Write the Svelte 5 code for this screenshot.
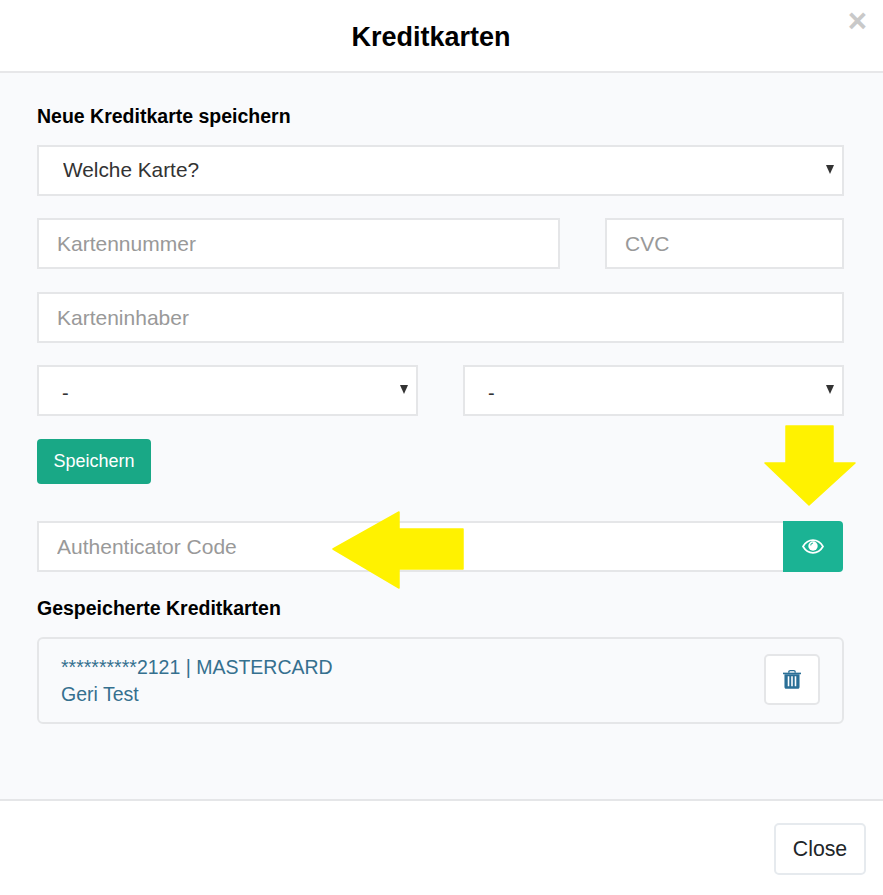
<script>
	const months = ["-"];
	const years = ["-"];
</script>

<div class="modal">
	<header class="modal-header">
		<h1>Kreditkarten</h1>
		<button class="close-x" aria-label="Schliessen">×</button>
	</header>

	<main class="modal-body">
		<h2>Neue Kreditkarte speichern</h2>

		<div class="select-wrap card-type">
			<select><option>Welche Karte?</option></select>
		</div>

		<div class="row number-row">
			<input class="number" placeholder="Kartennummer" />
			<input class="cvc" placeholder="CVC" />
		</div>

		<input class="holder" placeholder="Karteninhaber" />

		<div class="row expiry-row">
			<div class="select-wrap expiry">
				<select>{#each months as m}<option>{m}</option>{/each}</select>
			</div>
			<div class="select-wrap expiry">
				<select>{#each years as y}<option>{y}</option>{/each}</select>
			</div>
		</div>

		<button class="save">Speichern</button>

		<div class="auth-row">
			<input placeholder="Authenticator Code" />
			<button class="eye" aria-label="Anzeigen">
				<svg width="22" height="15" viewBox="0 0 22 15">
					<path d="M1 7.500C3.500 3.300 7 1.200 11 1.200s7.500 2.100 10 6.300c-2.500 4.200-6 6.300-10 6.300S3.500 11.700 1 7.500z" fill="none" stroke="#fff" stroke-width="1.700" />
					<circle cx="11" cy="7" r="4.700" fill="#fff" />
					<path d="M8.600 6.400c.2-1.300 1.100-2.200 2.400-2.400" fill="none" stroke="#1bb394" stroke-width="1.100" />
				</svg>
			</button>
		</div>

		<h2 class="saved-title">Gespeicherte Kreditkarten</h2>

		<div class="saved-card">
			<div class="saved-text">
				<div>**********2121 | MASTERCARD</div>
				<div>Geri Test</div>
			</div>
			<button class="trash" aria-label="Löschen">
				<svg width="18" height="19" viewBox="0 0 16 18" preserveAspectRatio="none">
					<path d="M5.200 2.600V1.700C5.200 1 5.700.6 6.300.6h3.400c.6 0 1.100.4 1.100 1.100v.9" fill="none" stroke="#2a6f97" stroke-width="1.200" />
					<path d="M0 2.500h16V4H0z" fill="#2a6f97" />
					<path fill-rule="evenodd" d="M1.300 4h13.400v12c0 1.100-.8 1.800-1.800 1.800H3.100c-1 0-1.800-.7-1.800-1.800zM4.200 6v9.500h1.400V6zm3.100 0v9.500h1.400V6zm3.100 0v9.500h1.400V6z" fill="#2a6f97" />
				</svg>
			</button>
		</div>
	</main>

	<footer class="modal-footer">
		<button class="close">Close</button>
	</footer>

	<!-- annotation arrows drawn on top of the screenshot -->
	<svg class="arrow arrow-down" width="92" height="81" viewBox="0 0 92 81">
		<path d="M22 1h47v37h22L45 80 1 38h21z" fill="#fff200" stroke="#fff200" stroke-width="1.500" stroke-linejoin="round" />
	</svg>
	<svg class="arrow arrow-left" width="133" height="78" viewBox="0 0 133 78">
		<path d="M67 1v17h64v40H67v19L1 38z" fill="#fff200" stroke="#fff200" stroke-width="1.500" stroke-linejoin="round" />
	</svg>
</div>

<style>
	:global(body) {
		margin: 0;
		background: #fff;
	}

	.modal {
		position: relative;
		width: 883px;
		height: 895px;
		display: flex;
		flex-direction: column;
		font-family: "Liberation Sans", Arial, sans-serif;
		overflow: hidden;
	}

	.modal-header {
		position: relative;
		height: 71px;
		display: flex;
		align-items: center;
		justify-content: center;
		border-bottom: 2px solid #e7e7e9;
		background: #fff;
	}

	h1 {
		margin: 0;
		padding: 4px 21px 0 0;
		font-size: 27px;
		font-weight: 700;
		color: #000;
	}

	.close-x {
		position: absolute;
		top: 2px;
		right: 16px;
		padding: 0;
		border: 0;
		background: none;
		font: 700 33px/38px "Liberation Sans", Arial, sans-serif;
		color: #c9c9c9;
	}

	.modal-body {
		height: 726px;
		box-sizing: border-box;
		padding: 31px 39px 0 37px;
		display: flex;
		flex-direction: column;
		align-items: stretch;
		background: #f9fafc;
	}

	h2 {
		margin: 0 0 17px;
		font-size: 19.500px;
		line-height: 24px;
		font-weight: 700;
		color: #000;
	}

	input,
	select {
		box-sizing: border-box;
		width: 100%;
		height: 51px;
		border: 2px solid #e5e6e8;
		border-radius: 0;
		outline: none;
		background: #fff;
		font: 21px "Liberation Sans", Arial, sans-serif;
		color: #333;
	}

	input {
		padding: 1px 17px 0 18px;
	}

	input.holder {
		padding-top: 0;
	}

	input::placeholder {
		color: #999;
		opacity: 1;
	}

	select {
		appearance: none;
		padding: 0 23px 2px 24px;
		font-size: 20.800px;
	}

	.expiry select {
		padding: 4px 23px 0;
		font-size: 20px;
	}

	.select-wrap {
		position: relative;
	}

	.select-wrap::after {
		content: "";
		position: absolute;
		right: 10px;
		top: 20px;
		border-left: 4.500px solid transparent;
		border-right: 4.500px solid transparent;
		border-top: 9px solid #333;
		pointer-events: none;
	}

	.row {
		display: flex;
	}

	.number-row {
		gap: 45px;
		margin: 22px 0 23px;
	}

	.number {
		width: 523px;
	}

	.cvc {
		flex: 1;
		min-width: 0;
	}

	.expiry-row {
		gap: 45px;
		margin-top: 22px;
	}

	.expiry {
		flex: 1;
	}

	.save {
		align-self: flex-start;
		width: 114px;
		height: 45px;
		margin-top: 23px;
		border: 0;
		border-radius: 4px;
		background: #19a886;
		color: #fff;
		font: 18px "Liberation Sans", Arial, sans-serif;
	}

	.auth-row {
		display: flex;
		margin: 37px 1px 0 0;
	}

	.auth-row input {
		flex: 1;
		min-width: 0;
		border-right: 0;
	}

	.eye {
		width: 60px;
		height: 51px;
		padding: 0;
		border: 0;
		border-radius: 0 4px 4px 0;
		background: #1bb394;
		display: flex;
		align-items: center;
		justify-content: center;
	}

	.saved-title {
		margin: 24px 0 17px;
	}

	.saved-card {
		box-sizing: border-box;
		height: 87px;
		padding: 15px 22px 0 22px;
		display: flex;
		justify-content: space-between;
		border: 2px solid #e5e6e8;
		border-radius: 6px;
	}

	.saved-text {
		font-size: 19.500px;
		line-height: 27px;
		color: #35708f;
	}

	.trash {
		width: 56px;
		height: 51px;
		padding: 0;
		border: 2px solid #e5e6e8;
		border-radius: 5px;
		background: #fff;
		display: flex;
		align-items: center;
		justify-content: center;
	}

	.modal-footer {
		flex: 1;
		display: flex;
		justify-content: flex-end;
		align-items: flex-start;
		padding: 22px 17px 0 0;
		border-top: 2px solid #e5e6e8;
		background: #fff;
	}

	.close {
		width: 92px;
		height: 52px;
		border: 2px solid #e6eaee;
		border-radius: 5px;
		background: #fff;
		color: #212529;
		font: 21.300px "Liberation Sans", Arial, sans-serif;
	}

	.arrow {
		position: absolute;
	}

	.arrow-down {
		left: 764px;
		top: 425px;
	}

	.arrow-left {
		left: 332px;
		top: 511px;
	}
</style>
